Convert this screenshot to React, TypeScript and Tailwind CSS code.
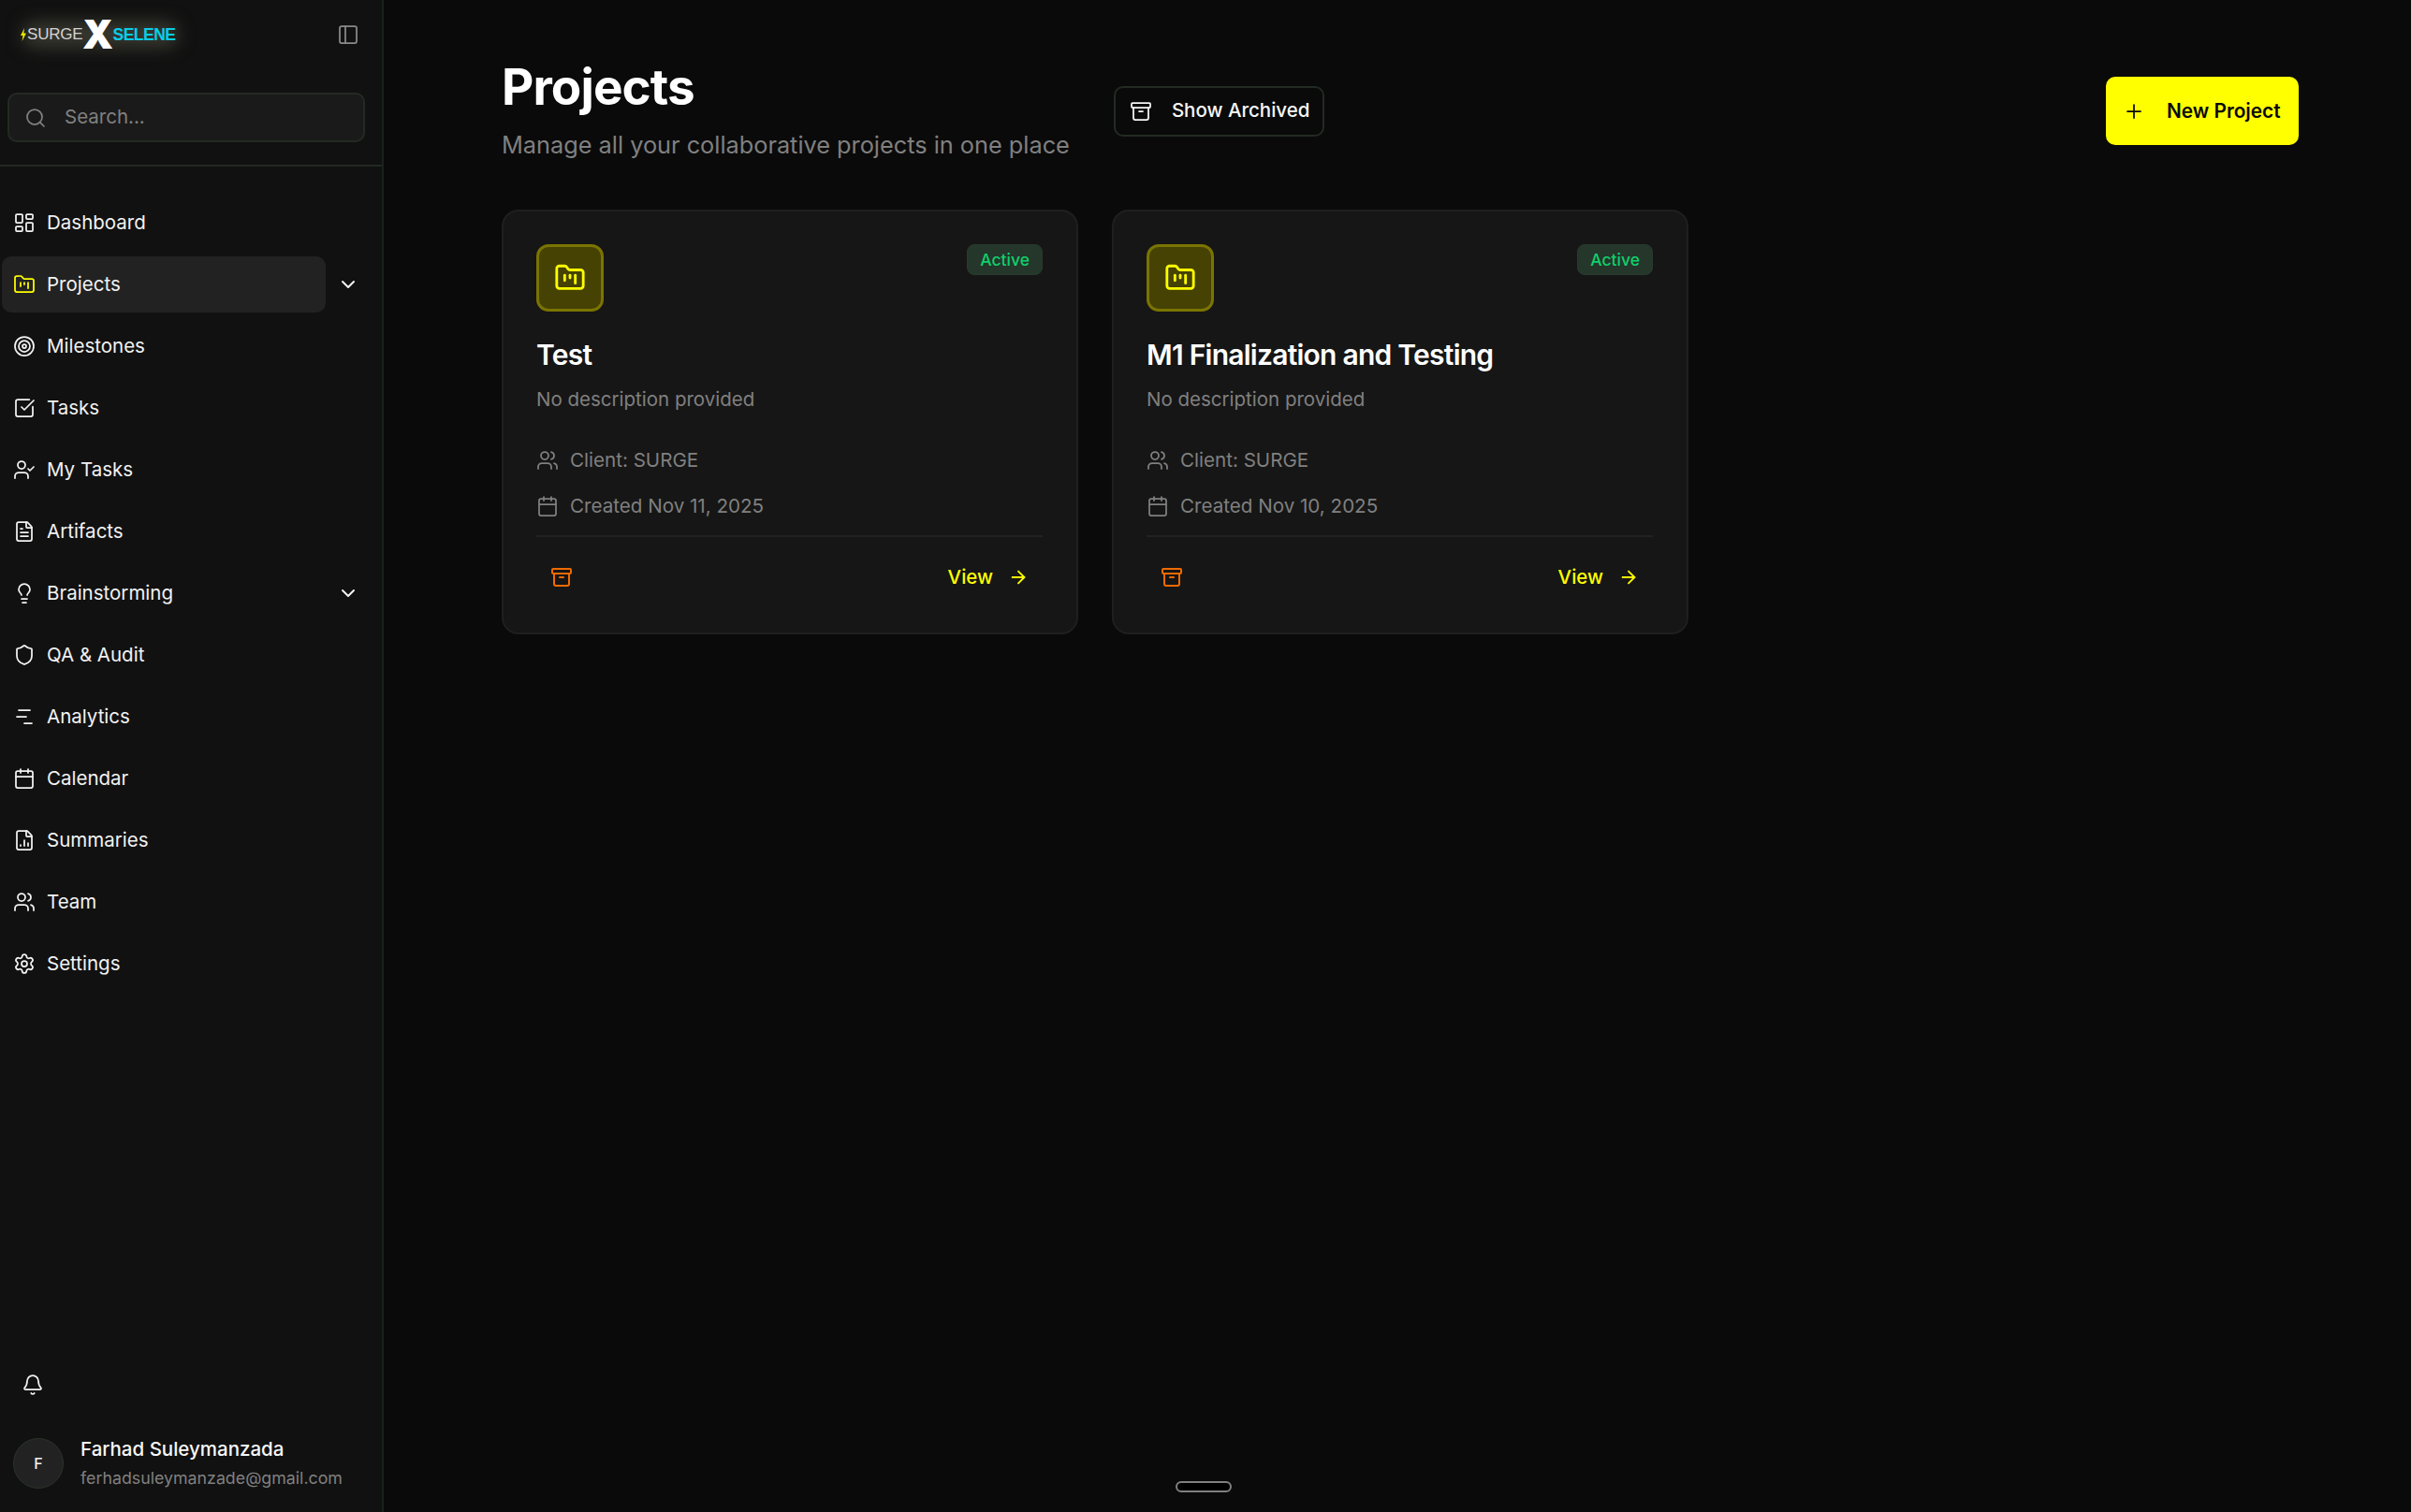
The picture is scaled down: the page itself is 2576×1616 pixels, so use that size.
import {
  Archive,
  ArrowRight,
  Bell,
  Calendar,
  ChartNoAxesGantt,
  ChevronDown,
  FileChartColumn,
  FileText,
  FolderKanban,
  LayoutDashboard,
  Lightbulb,
  PanelLeft,
  Plus,
  Search,
  Settings,
  Shield,
  SquareCheckBig,
  Target,
  UserCheck,
  Users,
} from "lucide-react";

const navItems = [
  { label: "Dashboard", icon: LayoutDashboard },
  { label: "Projects", icon: FolderKanban, active: true, chevron: true },
  { label: "Milestones", icon: Target },
  { label: "Tasks", icon: SquareCheckBig },
  { label: "My Tasks", icon: UserCheck },
  { label: "Artifacts", icon: FileText },
  { label: "Brainstorming", icon: Lightbulb, chevron: true },
  { label: "QA & Audit", icon: Shield },
  { label: "Analytics", icon: ChartNoAxesGantt },
  { label: "Calendar", icon: Calendar },
  { label: "Summaries", icon: FileChartColumn },
  { label: "Team", icon: Users },
  { label: "Settings", icon: Settings },
];

const projects = [
  { name: "Test", created: "Created Nov 11, 2025" },
  { name: "M1 Finalization and Testing", created: "Created Nov 10, 2025" },
];

function Logo() {
  return (
    <div className="relative flex h-[30px] items-center font-['Liberation_Sans',sans-serif]">
      <div className="absolute left-[2px] top-[2px] h-[26px] w-[166px] rounded-full bg-[#3a3a32] blur-[9px]" />
      <svg className="relative" width="6" height="14" viewBox="0 0 6 14">
        <path d="M4 0 0 8h2.4L1.6 14 6 5.6H3.4z" fill="#e6e600" />
      </svg>
      <span className="relative ml-[1px] text-[17px] font-medium tracking-[-0.2px] text-[#d4d4d4]">SURGE</span>
      <span className="relative -ml-[2px] w-[36px] text-center font-['Inter',sans-serif] text-[42px] leading-[30px] font-black text-white">
        X
      </span>
      <span className="relative -ml-[2px] text-[17.5px] font-bold tracking-[-0.5px] text-[#06cfe8]">SELENE</span>
    </div>
  );
}

function Sidebar() {
  return (
    <aside className="flex h-[1616px] w-[410px] shrink-0 flex-col border-r-2 border-[#1a211a] bg-[#111111]">
      <div className="flex h-[74px] items-center justify-between pr-[24px] pl-[22px]">
        <Logo />
        <PanelLeft size={24} strokeWidth={1.75} className="text-[#8a8a8a]" />
      </div>
      <div className="px-[8px] pt-[25px] pr-[18px] pb-[24px]">
        <div className="flex h-[53px] items-center gap-[19px] rounded-[10px] border-2 border-[#232a23] bg-[#1a1a1a] pl-[16px] text-[20.5px] text-[#808080]">
          <Search size={24} strokeWidth={1.75} />
          <span>Search...</span>
        </div>
      </div>
      <div className="h-[2px] bg-[#222922]" />
      <nav className="flex flex-col gap-[6px] pt-[30px]">
        {navItems.map((item) => (
          <div key={item.label} className="flex h-[60px] items-center">
            <div
              className={`ml-[2px] flex h-[60px] w-[346px] items-center gap-[12px] rounded-[10px] pl-[12px] text-[20.5px] text-[#f2f2f2] ${
                item.active ? "bg-[#222222]" : ""
              }`}
            >
              <item.icon
                size={24}
                strokeWidth={1.75}
                className={item.active ? "text-[#ffff00]" : "text-[#f2f2f2]"}
              />
              <span>{item.label}</span>
            </div>
            {item.chevron && (
              <ChevronDown size={24} strokeWidth={2} className="ml-[12px] text-[#f2f2f2]" />
            )}
          </div>
        ))}
      </nav>
      <div className="mt-auto px-[14px] pb-[21px]">
        <Bell size={24} strokeWidth={1.75} className="ml-[9px] text-[#f2f2f2]" />
        <div className="mt-[41px] flex items-center gap-[18px]">
          <div className="flex h-[54px] w-[54px] items-center justify-center rounded-full border border-[#2a332a] bg-[#222222] text-[16px] font-medium text-[#f2f2f2]">
            F
          </div>
          <div className="flex flex-col">
            <span className="text-[20.5px] leading-[31px] font-medium text-[#f7f7f7]">Farhad Suleymanzada</span>
            <span className="text-[17.8px] leading-[31px] text-[#808080]">ferhadsuleymanzade@gmail.com</span>
          </div>
        </div>
      </div>
    </aside>
  );
}

function ProjectCard({ name, created }: { name: string; created: string }) {
  return (
    <div className="flex h-[454px] flex-col rounded-[18px] border-2 border-[#1f1f1f] bg-[#161616] pt-[35px] pr-[36px] pl-[35px]">
      <div className="flex items-start justify-between">
        <div className="flex h-[72px] w-[72px] items-center justify-center rounded-[13px] border-[3px] border-[#7a7400] bg-[#454204]">
          <FolderKanban size={34} strokeWidth={2} className="text-[#ffff00]" />
        </div>
        <span className="flex h-[33px] items-center rounded-[8px] border border-[#2a3a2f] bg-[#25362b] px-[13px] pt-[1px] text-[17.5px] font-medium text-[#0fd06c]">
          Active
        </span>
      </div>
      <h3 className="mt-[28px] text-[30px] leading-[36px] font-semibold tracking-[-0.75px] text-white">{name}</h3>
      <p className="mt-[15px] text-[20.5px] leading-[30px] text-[#808080]">No description provided</p>
      <div className="mt-[35px] flex items-center gap-[12px] text-[20.6px] leading-[30px] text-[#808080]">
        <Users size={24} strokeWidth={1.75} />
        <span>Client: SURGE</span>
      </div>
      <div className="mt-[19px] flex items-center gap-[12px] text-[20.6px] leading-[30px] text-[#808080]">
        <Calendar size={24} strokeWidth={1.75} />
        <span>{created}</span>
      </div>
      <div className="mt-[16px] flex items-center justify-between border-t-2 border-[#222222] pt-[28px] pr-[15px] pl-[15px]">
        <Archive size={24} strokeWidth={2} className="text-[#f06a00]" />
        <div className="flex items-center gap-[16px] text-[20.5px] font-medium text-[#ffff00]">
          <span>View</span>
          <ArrowRight size={22} strokeWidth={2} />
        </div>
      </div>
    </div>
  );
}

export default function App() {
  return (
    <div className="relative flex h-[1616px] w-[2576px] overflow-hidden bg-[#0a0a0a] font-['Inter',sans-serif]">
      <Sidebar />
      <main className="flex-1 pt-[59px] pr-[120px] pl-[126px]">
        <header className="flex items-center">
          <div className="pb-[4px]">
            <h1 className="-mt-[1px] text-[53px] leading-[70px] font-bold tracking-[-0.9px] text-white">Projects</h1>
            <p className="mt-[8px] text-[25.3px] leading-[38px] text-[#808080]">
              Manage all your collaborative projects in one place
            </p>
          </div>
          <button className="ml-[47px] flex h-[54px] w-[225px] items-center gap-[21px] rounded-[10px] border-2 border-[#232a23] pl-[15px] text-[20.5px] font-medium text-[#f7f7f7]">
            <Archive size={24} strokeWidth={1.75} />
            <span>Show Archived</span>
          </button>
          <button className="ml-auto flex h-[73px] w-[206px] items-center gap-[23px] rounded-[10px] bg-[#ffff00] pl-[18px] text-[20.8px] font-semibold text-[#0a0a0a]">
            <Plus size={24} strokeWidth={1.75} />
            <span>New Project</span>
          </button>
        </header>
        <div className="mt-[46px] grid grid-cols-3 gap-[36px]">
          {projects.map((p) => (
            <ProjectCard key={p.name} name={p.name} created={p.created} />
          ))}
        </div>
      </main>
      <div className="absolute top-[1583px] left-[1256px] h-[12px] w-[60px] rounded-full border-2 border-[#808080] bg-black" />
    </div>
  );
}
